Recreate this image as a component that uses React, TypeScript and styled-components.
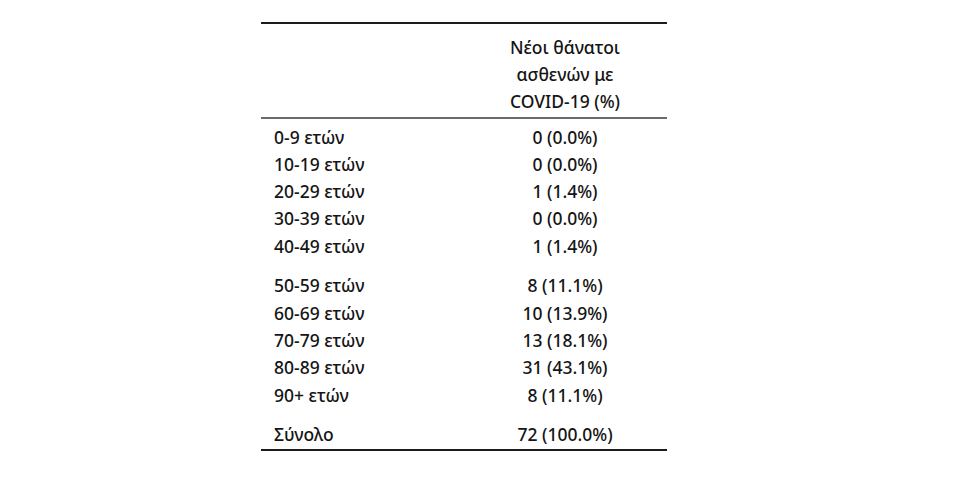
import React from "react";
import styled, { createGlobalStyle } from "styled-components";

const Global = createGlobalStyle`
  html, body { margin: 0; padding: 0; background: #ffffff; }
  body { font-family: "Noto Sans", "Open Sans", sans-serif; color: #151515; }
`;

const Page = styled.div`
  width: 960px;
  height: 483px;
  padding-top: 22px;
  padding-left: 261px;
  box-sizing: border-box;
`;

const Table = styled.div`
  width: 406px;
  border-top: 2px solid #1c1c1c;
  border-bottom: 2px solid #1c1c1c;
  font-size: 17.5px;
  font-weight: 500;
`;

const Header = styled.div`
  display: grid;
  grid-template-columns: 202px 204px;
  padding: 10px 0 2px;
  border-bottom: 2px solid #6a6a6a;
  line-height: 27px;
`;

const HeadCell = styled.div`
  grid-column: 2;
  text-align: center;
`;

const Group = styled.div<{ $top: number }>`
  padding-top: ${(p) => p.$top}px;
`;

const Row = styled.div`
  display: grid;
  grid-template-columns: 202px 204px;
  line-height: 27.3px;
  height: 27.3px;
`;

const Label = styled.div`
  padding-left: 13px;
`;

const Value = styled.div`
  text-align: center;
`;

const groups: [string, string][][] = [
  [
    ["0-9 ετών", "0 (0.0%)"],
    ["10-19 ετών", "0 (0.0%)"],
    ["20-29 ετών", "1 (1.4%)"],
    ["30-39 ετών", "0 (0.0%)"],
    ["40-49 ετών", "1 (1.4%)"],
  ],
  [
    ["50-59 ετών", "8 (11.1%)"],
    ["60-69 ετών", "10 (13.9%)"],
    ["70-79 ετών", "13 (18.1%)"],
    ["80-89 ετών", "31 (43.1%)"],
    ["90+ ετών", "8 (11.1%)"],
  ],
  [["Σύνολο", "72 (100.0%)"]],
];

const tops = [4.5, 12.4, 12.5];

export default function App() {
  return (
    <>
      <Global />
      <Page>
        <Table>
          <Header>
            <HeadCell>
              Νέοι θάνατοι
              <br />
              ασθενών με
              <br />
              COVID-19 (%)
            </HeadCell>
          </Header>
          {groups.map((g, i) => (
            <Group key={i} $top={tops[i]}>
              {g.map(([l, v]) => (
                <Row key={l}>
                  <Label>{l}</Label>
                  <Value>{v}</Value>
                </Row>
              ))}
            </Group>
          ))}
        </Table>
      </Page>
    </>
  );
}
